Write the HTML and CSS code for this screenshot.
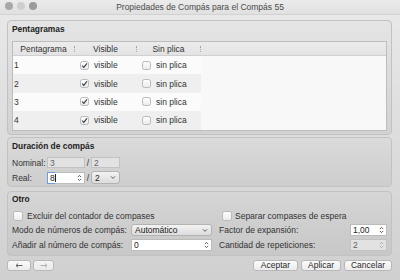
FILE: index.html
```html
<!DOCTYPE html>
<html lang="es">
<head>
    <meta charset="UTF-8">
    <title>Propiedades de Compás para el Compás 55</title>
    <link rel="stylesheet" href="styles.css">
</head>
<body>
    <div class="window">
        <div class="titlebar">
            <div class="lights">
                <span class="light l1"></span>
                <span class="light l2"></span>
                <span class="light l3"></span>
            </div>
            <span class="title">Propiedades de Compás para el Compás 55</span>
        </div>

        <div class="content">
            <!-- Pentagramas -->
            <div class="group staves">
                <div class="group-title">Pentagramas</div>
                <div class="table">
                    <div class="thead">
                        <div class="th c1"><span class="th-text">Pentagrama</span><span class="sep"></span></div>
                        <div class="th c2"><span class="th-text">Visible</span><span class="sep"></span></div>
                        <div class="th c3"><span class="th-text">Sin plica</span><span class="sep"></span></div>
                    </div>
                    <div class="tr">
                        <div class="td c1">1</div>
                        <div class="td c2"><span class="check small on"><svg width="9" height="9" viewBox="0 0 9 9"><path d="M2.2 4.6 L3.8 6.3 L7 2.3" fill="none" stroke="#3a3a3a" stroke-width="1.1"/></svg></span>visible</div>
                        <div class="td c3"><span class="check small"></span>sin plica</div>
                    </div>
                    <div class="tr alt">
                        <div class="td c1">2</div>
                        <div class="td c2"><span class="check small on"><svg width="9" height="9" viewBox="0 0 9 9"><path d="M2.2 4.6 L3.8 6.3 L7 2.3" fill="none" stroke="#3a3a3a" stroke-width="1.1"/></svg></span>visible</div>
                        <div class="td c3"><span class="check small"></span>sin plica</div>
                    </div>
                    <div class="tr">
                        <div class="td c1">3</div>
                        <div class="td c2"><span class="check small on"><svg width="9" height="9" viewBox="0 0 9 9"><path d="M2.2 4.6 L3.8 6.3 L7 2.3" fill="none" stroke="#3a3a3a" stroke-width="1.1"/></svg></span>visible</div>
                        <div class="td c3"><span class="check small"></span>sin plica</div>
                    </div>
                    <div class="tr alt">
                        <div class="td c1">4</div>
                        <div class="td c2"><span class="check small on"><svg width="9" height="9" viewBox="0 0 9 9"><path d="M2.2 4.6 L3.8 6.3 L7 2.3" fill="none" stroke="#3a3a3a" stroke-width="1.1"/></svg></span>visible</div>
                        <div class="td c3"><span class="check small"></span>sin plica</div>
                    </div>
                </div>
            </div>

            <!-- Duración de compás -->
            <div class="group duration">
                <div class="group-title">Duración de compás</div>
                <div class="dur-row nominal">
                    <span class="dur-label">Nominal:</span>
                    <span class="field disabled num">3</span>
                    <span class="slash">/</span>
                    <span class="field disabled den">2</span>
                </div>
                <div class="dur-row real">
                    <span class="dur-label">Real:</span>
                    <span class="field spin num focus">
                        <span class="sel">8</span><span class="caret"></span>
                        <svg class="spinner" width="5" height="8" viewBox="0 0 5 8"><path d="M0.8 3.1 L2.5 1.4 L4.2 3.1 M0.8 4.9 L2.5 6.6 L4.2 4.9" fill="none" stroke="#4a4a4a" stroke-width="0.9"/></svg>
                    </span>
                    <span class="slash">/</span>
                    <span class="combo den">
                        <span class="combo-text">2</span>
                        <svg width="6" height="5" viewBox="0 0 6 5"><path d="M1 1.4 L3 3.4 L5 1.4" fill="none" stroke="#4a4a4a" stroke-width="0.9"/></svg>
                    </span>
                </div>
            </div>

            <!-- Otro -->
            <div class="group other">
                <div class="group-title">Otro</div>
                <div class="other-grid">
                    <label class="opt left-opt"><span class="check"></span>Excluir del contador de compases</label>
                    <label class="opt right-opt"><span class="check"></span>Separar compases de espera</label>

                    <span class="lbl">Modo de números de compás:</span>
                    <span class="combo wide">
                        <span class="combo-text">Automático</span>
                        <svg width="6" height="5" viewBox="0 0 6 5"><path d="M1 1.4 L3 3.4 L5 1.4" fill="none" stroke="#4a4a4a" stroke-width="0.9"/></svg>
                    </span>
                    <span class="lbl rlbl">Factor de expansión:</span>
                    <span class="field spin">
                        <span class="spin-text">1,00</span>
                        <svg class="spinner" width="5" height="8" viewBox="0 0 5 8"><path d="M0.8 3.1 L2.5 1.4 L4.2 3.1 M0.8 4.9 L2.5 6.6 L4.2 4.9" fill="none" stroke="#4a4a4a" stroke-width="0.9"/></svg>
                    </span>

                    <span class="lbl">Añadir al número de compás:</span>
                    <span class="field spin">
                        <span class="spin-text">0</span>
                        <svg class="spinner" width="5" height="8" viewBox="0 0 5 8"><path d="M0.8 3.1 L2.5 1.4 L4.2 3.1 M0.8 4.9 L2.5 6.6 L4.2 4.9" fill="none" stroke="#4a4a4a" stroke-width="0.9"/></svg>
                    </span>
                    <span class="lbl rlbl">Cantidad de repeticiones:</span>
                    <span class="field spin disabled">
                        <span class="spin-text">2</span>
                        <svg class="spinner" width="5" height="8" viewBox="0 0 5 8"><path d="M0.8 3.1 L2.5 1.4 L4.2 3.1 M0.8 4.9 L2.5 6.6 L4.2 4.9" fill="none" stroke="#a8a8a8" stroke-width="0.9"/></svg>
                    </span>
                </div>
            </div>

            <div class="footer">
                <div class="nav">
                    <button class="btn back"><svg width="8" height="5" viewBox="0 0 8 5"><path d="M7.5 2.5 H1 M3 0.6 L1 2.5 L3 4.4" fill="none" stroke="#555" stroke-width="0.9"/></svg></button>
                    <button class="btn fwd" disabled><svg width="8" height="5" viewBox="0 0 8 5"><path d="M0.5 2.5 H7 M5 0.6 L7 2.5 L5 4.4" fill="none" stroke="#aaa" stroke-width="0.9"/></svg></button>
                </div>
                <div class="actions">
                    <button class="btn ok">Aceptar</button>
                    <button class="btn apply">Aplicar</button>
                    <button class="btn cancel">Cancelar</button>
                </div>
            </div>
        </div>
    </div>
</body>
</html>
```

FILE: styles.css
```css
* {
    box-sizing: border-box;
}
body {
    margin: 0;
    font-family: "Liberation Sans", Arial, sans-serif;
    font-size: 8.5px;
    color: #2a2a2a;
    background-color: #d4d4d4;
}
.window {
    width: 400px;
    height: 280px;
    overflow: hidden;
    background: linear-gradient(#e9e9e9, #d0d0d0);
}

/* title bar */
.titlebar {
    height: 15px;
    position: relative;
    display: flex;
    align-items: center;
    justify-content: center;
    background: linear-gradient(#ebebeb, #e0e0e0);
    border-bottom: 1px solid #d2d2d2;
}
.lights {
    position: absolute;
    left: 5px;
    top: 2px;
    display: flex;
    gap: 4px;
}
.light {
    width: 8px;
    height: 8px;
    border-radius: 50%;
    background-color: #a8a8a8;
}
.light.l2 {
    background-color: #cecece;
}
.light.l3 {
    background-color: #9b9b9b;
}
.title {
    color: #4a4a4a;
    line-height: 14px;
}

.content {
    padding: 5px 8px 0 7px;
}

/* group boxes */
.group {
    border: 1px solid #c2c2c2;
    border-radius: 4px;
    background: linear-gradient(rgba(0, 0, 0, 0.01), rgba(0, 0, 0, 0.05));
    padding: 2px 4px 0 4px;
}
.group-title {
    font-weight: bold;
    font-size: 8.4px;
    line-height: 12px;
    color: #222;
}
.staves {
    height: 115px;
}
.staves .group-title {
    margin-bottom: 6px;
}
.duration {
    height: 50px;
    margin-top: 2px;
}
.other {
    height: 65px;
    margin-top: 4px;
    padding-top: 1px;
}

/* table */
.table {
    border: 1px solid #bdbdbd;
    background-color: #f8f8f8;
    height: 89.6px;
}
.thead {
    display: flex;
    height: 14px;
    background: linear-gradient(#ececec, #e3e3e3);
    border-bottom: 1px solid #d0d0d0;
}
.th {
    display: flex;
    align-items: center;
    color: #333;
}
.th-text {
    flex: 1;
    text-align: center;
}
.sep {
    width: 1px;
    height: 6px;
    border-left: 1px dotted #a5a5a5;
}
.c1 {
    width: 62px;
}
.c2 {
    width: 62px;
}
.c3 {
    width: 64px;
}
.tr {
    display: flex;
    width: 188px;
    height: 18.4px;
    background-color: #fbfbfb;
}
.tr.alt {
    background-color: #efefef;
}
.td {
    display: flex;
    align-items: center;
    color: #333;
}
.td.c1 {
    padding-left: 1px;
}
.td.c2,
.td.c3 {
    padding-left: 5px;
}

/* checkboxes */
.check {
    display: inline-flex;
    width: 10px;
    height: 10px;
    border: 1px solid #b9b9b9;
    border-radius: 2.5px;
    background: linear-gradient(#fdfdfd, #ececec);
    margin-right: 4px;
    flex-shrink: 0;
}
.check.small {
    width: 9px;
    height: 9px;
    margin-right: 5px;
}
.check svg {
    margin: -1px;
}

/* duration rows */
.dur-row {
    display: flex;
    align-items: center;
}
.nominal {
    height: 11px;
    margin-top: 5px;
}
.real {
    height: 13px;
    margin-top: 3px;
}
.dur-label {
    width: 35px;
    color: #333;
}
.slash {
    width: 6px;
    text-align: center;
    color: #333;
}
.num {
    width: 38px;
}
.den {
    width: 29px;
}

/* inputs */
.field {
    display: flex;
    align-items: center;
    height: 11px;
    border: 1px solid #bcbcbc;
    background-color: #fff;
    padding-left: 2px;
    color: #222;
}
.field.disabled {
    background-color: #e2e2e2;
    color: #626262;
    border-color: #c2c2c2;
}
.field.spin {
    justify-content: space-between;
    padding-right: 2px;
}
.field.focus {
    height: 12px;
    padding-left: 0;
}
.sel {
    border: 1px solid #6b9fe3;
    border-right: none;
    height: 12px;
    margin-top: -1px;
    margin-bottom: -1px;
    margin-left: -1px;
    padding-left: 2px;
    line-height: 10px;
}
.caret {
    width: 1px;
    height: 8px;
    background-color: #222;
    margin-right: auto;
}
.combo {
    display: flex;
    align-items: center;
    justify-content: space-between;
    height: 13px;
    border: 1px solid #b3b3b3;
    border-radius: 3px;
    background: linear-gradient(#f3f3f3, #dcdcdc);
    padding: 0 3px 0 3px;
    color: #222;
}

/* otro grid */
.other-grid {
    display: grid;
    grid-template-columns: 119px 81px 138px 37px;
    grid-template-rows: 11px 12px 12px;
    row-gap: 3px;
    margin-top: 5px;
    align-items: center;
}
.opt {
    display: flex;
    align-items: center;
    color: #333;
}
.left-opt {
    grid-column: 1 / 3;
    padding-left: 1px;
}
.right-opt {
    grid-column: 3 / 5;
    padding-left: 10px;
}
.right-opt .check {
    margin-right: 3px;
}
.lbl {
    color: #333;
}
.rlbl {
    padding-left: 7px;
}
.combo.wide {
    height: 12px;
}
.other-grid .field {
    height: 12px;
}

/* footer */
.footer {
    display: flex;
    justify-content: space-between;
    margin-top: 4px;
}
.nav,
.actions {
    display: flex;
    gap: 2px;
}
.actions {
    gap: 3px;
}
.btn {
    height: 11px;
    padding: 0;
    border: 1px solid #b8b8b8;
    border-radius: 3px;
    background: linear-gradient(#fbfbfb, #ececec);
    font-family: "Liberation Sans", Arial, sans-serif;
    font-size: 8.5px;
    color: #2a2a2a;
    display: flex;
    align-items: center;
    justify-content: center;
    line-height: 9px;
}
.back {
    width: 24px;
}
.fwd {
    width: 21px;
    background: linear-gradient(#f4f4f4, #e9e9e9);
}
.ok {
    width: 45px;
}
.apply {
    width: 40px;
}
.cancel {
    width: 48px;
}
```
